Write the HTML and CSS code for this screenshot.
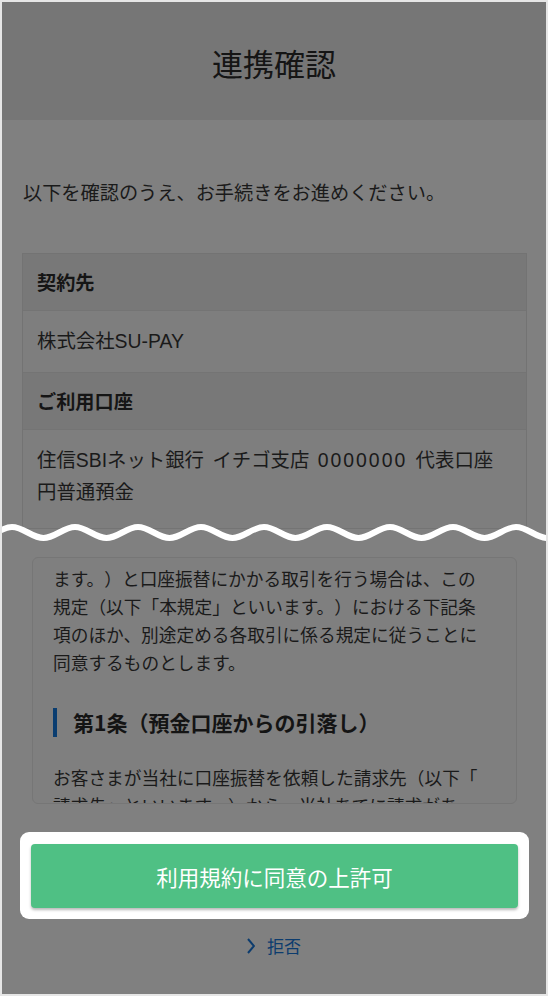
FILE: index.html
```html
<!DOCTYPE html>
<html lang="ja">
<head>
<meta charset="utf-8">
<title>連携確認</title>
<link rel="stylesheet" href="styles.css">
</head>
<body>
<div class="frame">
  <div class="screen">
    <section class="top">
      <header class="header"><h1 class="title">連携確認</h1></header>
      <p class="intro">以下を確認のうえ、お手続きをお進めください。</p>
      <dl class="card">
        <dt class="card-label">契約先</dt>
        <dd class="card-value">株式会社SU-PAY</dd>
        <dt class="card-label">ご利用口座</dt>
        <dd class="card-value card-value--multi">住信SBIネット銀行 イチゴ支店 <span class="acct-no">0000000</span> 代表口座<br>円普通預金</dd>
      </dl>
    </section>
    <svg class="wave" viewBox="0 0 544 22" preserveAspectRatio="none" aria-hidden="true">
      <path d="M-53 5 C-41.7 5 -32.8 16 -21.5 16 S-1.3 5 10 5 S30.2 16 41.5 16 S61.7 5 73 5 S93.2 16 104.5 16 S124.7 5 136 5 S156.2 16 167.5 16 S187.7 5 199 5 S219.2 16 230.5 16 S250.7 5 262 5 S282.2 16 293.5 16 S313.7 5 325 5 S345.2 16 356.5 16 S376.7 5 388 5 S408.2 16 419.5 16 S439.7 5 451 5 S471.2 16 482.5 16 S502.7 5 514 5 S534.2 16 545.5 16 S565.7 5 577 5" fill="none" stroke="#ffffff" stroke-width="6"/>
    </svg>
    <section class="bottom">
      <div class="terms">
        <p class="terms-text">ます。）と口座振替にかかる取引を行う場合は、この<br>規定（以下「本規定」といいます。）における下記条<br>項のほか、別途定める各取引に係る規定に従うことに<br>同意するものとします。</p>
        <h2 class="terms-heading">第1条（預金口座からの引落し）</h2>
        <p class="terms-text">お客さまが当社に口座振替を依頼した請求先（以下「<br>請求先」といいます。）から、当社あてに請求があった場合には、</p>
      </div>
      <div class="action-highlight">
        <button class="btn-primary" type="button">利用規約に同意の上許可</button>
      </div>
      <a class="reject" href="#">
        <svg class="reject-icon" viewBox="0 0 8 16" aria-hidden="true"><polyline points="1,1 7,8 1,15" fill="none" stroke="currentColor" stroke-width="2"/></svg>
        <span>拒否</span>
      </a>
    </section>
  </div>
</div>
</body>
</html>
```
FILE: styles.css
```css
* { box-sizing: border-box; }

html, body {
  margin: 0;
  padding: 0;
  background: #e6e6e6;
}

body {
  font-family: "Noto Sans CJK JP", "Noto Sans", sans-serif;
  color: #1a1a1a;
  text-spacing-trim: space-all;
}

.frame {
  width: 548px;
  height: 996px;
  padding: 2px;
  background: #e6e6e6;
}

.screen {
  height: 992px;
  background: #808080;
  overflow: hidden;
  display: flex;
  flex-direction: column;
}

.top {
  height: 532px;
  flex-shrink: 0;
  overflow: hidden;
}

.header {
  height: 118px;
  background: #767676;
  display: flex;
  align-items: center;
  justify-content: center;
  padding-top: 3px;
}

.title {
  margin: 0;
  font-size: 31px;
  font-weight: 400;
  line-height: 1;
  color: #151515;
}

.intro {
  margin: 58px 0 0 21px;
  font-size: 19.2px;
  line-height: 28px;
  color: #1a1a1a;
}

.card {
  margin: 47px 19px 0 20px;
  border: 1px solid #737373;
  border-bottom: 0;
}

.card-label {
  background: #787878;
  padding: 15px 14px;
  font-size: 19.2px;
  line-height: 26px;
  font-weight: 700;
  color: #151515;
  border-bottom: 1px solid #747474;
}

.card-value {
  margin: 0;
  background: #7e7e7e;
  padding: 17px 14px;
  font-family: "Liberation Sans", "Noto Sans CJK JP", sans-serif;
  font-size: 19.4px;
  line-height: 27px;
  color: #1a1a1a;
  border-bottom: 1px solid #747474;
}

.card-value--multi {
  padding: 14px 14px 20px;
  line-height: 32px;
  word-spacing: 3px;
}

.acct-no {
  letter-spacing: 2px;
}

.wave {
  display: block;
  width: 544px;
  height: 22px;
  margin: -12px 0 -10px;
  position: relative;
  z-index: 1;
  flex-shrink: 0;
}

.bottom {
  flex: 1;
  padding-top: 23px;
}

.terms {
  margin: 0 29px 0 30px;
  height: 247px;
  border: 1.5px solid #767676;
  border-radius: 6px;
  background: #7f7f7f;
  overflow: hidden;
  padding: 6px 24px 0 20px;
}

.terms-text {
  margin: 0;
  font-size: 17.7px;
  line-height: 28px;
  color: #1a1a1a;
}

.terms-heading {
  margin: 32px 0 26px;
  font-size: 21px;
  line-height: 29px;
  font-weight: 700;
  color: #141414;
  border-left: 4px solid #0a3d70;
  padding-left: 16px;
}

.action-highlight {
  margin: 28px 17px 0 18px;
  background: #ffffff;
  border-radius: 9px;
  padding: 12px 11px 11px;
}

.btn-primary {
  display: block;
  width: 100%;
  height: 64px;
  border: 0;
  border-radius: 4px;
  background: #4fc084;
  color: #ffffff;
  font-family: "Noto Sans CJK JP", "Noto Sans", sans-serif;
  font-size: 21.5px;
  box-shadow: 0 2px 3px rgba(0, 0, 0, 0.28);
}

.reject {
  display: flex;
  justify-content: center;
  align-items: center;
  gap: 12px;
  margin-top: 15px;
  line-height: 24px;
  font-size: 17px;
  color: #0c3c6e;
  text-decoration: none;
}

.reject-icon {
  width: 8px;
  height: 16px;
  display: block;
}
```
